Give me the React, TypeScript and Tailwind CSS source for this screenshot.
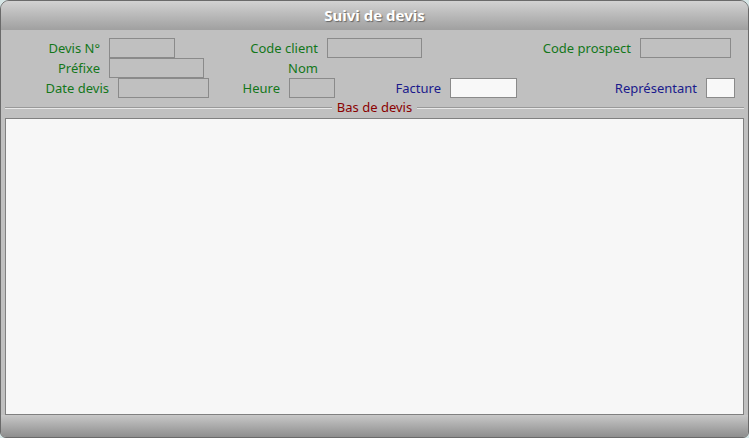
const Field = ({ w, white }: { w: string; white?: boolean }) => (
  <div className={`${w} h-[20px] ml-[9px] border border-[#8a8a8a] ${white ? "bg-[#f8f8f8]" : "bg-[#c0c0c0]"}`} />
);

export default function App() {
  const lbl = "text-right text-[13px] leading-[20px] text-[#13771a]";
  const blue = "text-right text-[13px] leading-[20px] text-[#1a1a8c]";
  return (
    <div className="w-[749px] h-[438px] bg-[#d6e6e6] font-[family-name:'DejaVu_Sans',sans-serif]">
      <div className="w-full h-full flex flex-col rounded-t-[9px] rounded-b-[6px] overflow-hidden bg-[#c0c0c0] border border-[#6a6a6a]">
        <div className="h-[29px] shrink-0 bg-gradient-to-b from-[#d2d2d2] to-[#a0a0a0] flex items-center justify-center text-white font-bold text-[15px] [text-shadow:1px_1px_1px_#666]">
          Suivi de devis
        </div>
        <div className="pt-[8px]">
          <div className="flex h-[20px]">
            <div className={`w-[99px] ${lbl}`}>Devis N°</div>
            <Field w="w-[66px]" />
            <div className={`w-[143px] ${lbl}`}>Code client</div>
            <Field w="w-[95px]" />
            <div className={`w-[209px] ${lbl}`}>Code prospect</div>
            <Field w="w-[91px]" />
          </div>
          <div className="flex h-[20px]">
            <div className={`w-[99px] ${lbl}`}>Préfixe</div>
            <Field w="w-[95px]" />
            <div className={`w-[114px] ${lbl}`}>Nom</div>
          </div>
          <div className="flex h-[20px]">
            <div className={`w-[108px] ${lbl}`}>Date devis</div>
            <Field w="w-[91px]" />
            <div className={`w-[71px] ${lbl}`}>Heure</div>
            <Field w="w-[46px]" />
            <div className={`w-[106px] ${blue}`}>Facture</div>
            <Field w="w-[67px]" white />
            <div className={`w-[180px] ${blue}`}>Représentant</div>
            <Field w="w-[29px]" white />
          </div>
        </div>
        <div className="flex items-center h-[20px] px-[4px]">
          <div className="flex-1 border-t border-b border-t-[#999] border-b-[#e8e8e8]" />
          <span className="px-[5px] text-[13px] text-[#8b0000]">Bas de devis</span>
          <div className="flex-1 border-t border-b border-t-[#999] border-b-[#e8e8e8]" />
        </div>
        <div className="mx-[4px] h-[297px] bg-[#f7f7f7] border border-[#808080]" />
        <div className="flex-1 bg-gradient-to-b from-[#c8c8c8] to-[#8e8e8e]" />
      </div>
    </div>
  );
}
